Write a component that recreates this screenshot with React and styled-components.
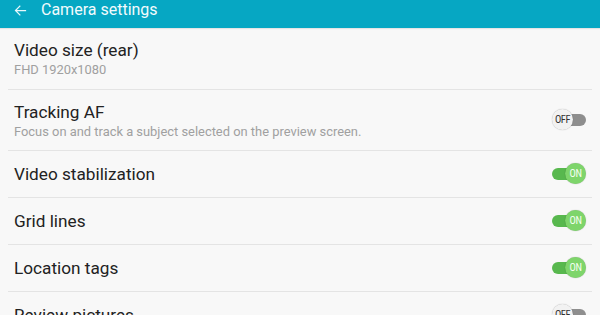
import React from "react";
import styled, { createGlobalStyle } from "styled-components";

const GlobalStyle = createGlobalStyle`
  html, body {
    margin: 0;
    padding: 0;
    background: #f8f8f8;
    font-family: Roboto, "Noto Sans", sans-serif;
    overflow: hidden;
  }
`;

const settings = [
  { title: "Video size (rear)", sub: "FHD 1920x1080" },
  {
    title: "Tracking AF",
    sub: "Focus on and track a subject selected on the preview screen.",
    toggle: false,
  },
  { title: "Video stabilization", toggle: true },
  { title: "Grid lines", toggle: true },
  { title: "Location tags", toggle: true },
  { title: "Review pictures", toggle: false },
];

const App = () => (
  <>
    <GlobalStyle />
    <Page>
      <Header>
        <BackArrow viewBox="0 0 24 24">
          <path d="M20 12H5M11 5l-7 7 7 7" />
        </BackArrow>
        <HeaderTitle>Camera settings</HeaderTitle>
      </Header>
      <List>
        {settings.map((s) => (
          <Row key={s.title} $tall={!!s.sub}>
            <Texts>
              <Title>{s.title}</Title>
              {s.sub && <Sub>{s.sub}</Sub>}
            </Texts>
            {s.toggle !== undefined && (
              <Switch $on={s.toggle}>
                <Track $on={s.toggle} />
                <Thumb $on={s.toggle}>{s.toggle ? "ON" : "OFF"}</Thumb>
              </Switch>
            )}
          </Row>
        ))}
      </List>
    </Page>
  </>
);

export default App;

const Page = styled.div`
  width: 600px;
  height: 315px;
  overflow: hidden;
  background: #f8f8f8;
`;

const Header = styled.div`
  height: 28px;
  background: #06a7c3;
  display: flex;
  align-items: center;
  padding-left: 13px;
  gap: 13px;
  box-shadow: 0 1px 1px rgba(0, 0, 0, 0.08);
`;

const BackArrow = styled.svg`
  width: 15px;
  height: 15px;
  fill: none;
  stroke: #e8f8fb;
  stroke-width: 2;
  stroke-linecap: square;
  margin-top: -8px;
`;

const HeaderTitle = styled.span`
  color: #f2fbfd;
  font-size: 16px;
  margin-top: -10px;
`;

const List = styled.div`
  display: flex;
  flex-direction: column;
`;

const Row = styled.div`
  height: ${(p) => (p.$tall ? "60px" : "46px")};
  margin: 0 8px;
  padding: 0 6px;
  border-bottom: 1px solid #e4e4e4;
  display: flex;
  align-items: center;
  justify-content: space-between;
  &:first-child {
    height: 61px;
  }
`;

const Texts = styled.div`
  display: flex;
  flex-direction: column;
`;

const Title = styled.div`
  font-size: 17.2px;
  color: #222;
  line-height: 22px;
`;

const Sub = styled.div`
  font-size: 12.9px;
  color: #a0a0a0;
  line-height: 16px;
  margin-top: 1px;
`;

const Switch = styled.div`
  position: relative;
  width: 34px;
  height: 22px;
`;

const Track = styled.div`
  position: absolute;
  left: ${(p) => (p.$on ? "0" : "4px")};
  top: 5px;
  width: 30px;
  height: 12px;
  border-radius: 6px;
  background: ${(p) => (p.$on ? "#58b84e" : "#8e8e8e")};
`;

const Thumb = styled.div`
  position: absolute;
  top: 0;
  ${(p) => (p.$on ? "right: 0;" : "left: 0;")}
  width: 21px;
  height: 21px;
  border-radius: 50%;
  background: ${(p) => (p.$on ? "#7ed56b" : "#f2f2f2")};
  box-shadow: 0 0 1px rgba(0, 0, 0, 0.35);
  display: flex;
  align-items: center;
  justify-content: center;
  font-size: 10.5px;
  font-family: "Roboto Condensed", Roboto, sans-serif;
  letter-spacing: -0.5px;
  color: ${(p) => (p.$on ? "#f4fff2" : "#333")};
`;
